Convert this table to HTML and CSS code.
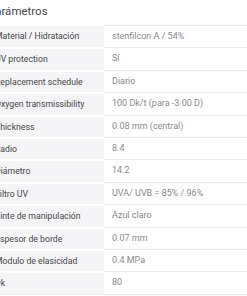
FILE: index.html
```html
<!DOCTYPE html>
<html lang="es">
<head>
    <meta charset="UTF-8">
    <meta name="viewport" content="width=device-width, initial-scale=1.0">
    <title>Parámetros</title>
    <link rel="stylesheet" href="styles.css">
</head>
<body>
    <div class="specs">
        <h2>Parámetros</h2>
        <div class="spec-table">
            <div class="row"><div class="label">Material / Hidratación</div><div class="value">stenfilcon A / 54%</div></div>
            <div class="row"><div class="label">UV protection</div><div class="value">Sí</div></div>
            <div class="row"><div class="label">Replacement schedule</div><div class="value">Diario</div></div>
            <div class="row"><div class="label">Oxygen transmissibility</div><div class="value">100 Dk/t (para -3.00 D)</div></div>
            <div class="row"><div class="label">Thickness</div><div class="value">0.08 mm (central)</div></div>
            <div class="row"><div class="label">Radio</div><div class="value">8.4</div></div>
            <div class="row"><div class="label">Diámetro</div><div class="value">14.2</div></div>
            <div class="row"><div class="label">Filtro UV</div><div class="value">UVA/ UVB = 85% / 96%</div></div>
            <div class="row"><div class="label">Tinte de manipulación</div><div class="value">Azul claro</div></div>
            <div class="row"><div class="label">Espesor de borde</div><div class="value">0.07 mm</div></div>
            <div class="row"><div class="label">Modulo de elasicidad</div><div class="value">0.4 MPa</div></div>
            <div class="row"><div class="label">Dk</div><div class="value">80</div></div>
        </div>
    </div>
</body>
</html>
```

FILE: styles.css
```css
body {
    margin: 0;
    background: #fff;
    font-family: Roboto, "Noto Sans", sans-serif;
    overflow: hidden;
}
.specs {
    margin-left: -13px;
}
h2 {
    margin: 0;
    padding-left: 1px;
    height: 25px;
    line-height: 23px;
    font-size: 11.5px;
    font-weight: 400;
    color: #484848;
}
.spec-table {
    border-bottom: 1px solid #ececec;
}
.row {
    display: flex;
    height: 22.4px;
}
.label {
    width: 109px;
    padding-left: 8px;
    background: #f5f5f7;
    border-top: 2px solid #fff;
    color: #474747;
    font-size: 8.7px;
    line-height: 20px;
    white-space: nowrap;
    overflow: hidden;
}
.value {
    flex: 1;
    padding-left: 8px;
    border-top: 1px solid #ececec;
    color: #8a8a8a;
    font-size: 9px;
    line-height: 21px;
    white-space: nowrap;
}
.row:first-child .label {
    border-top-width: 1px;
    line-height: 21px;
}
```
